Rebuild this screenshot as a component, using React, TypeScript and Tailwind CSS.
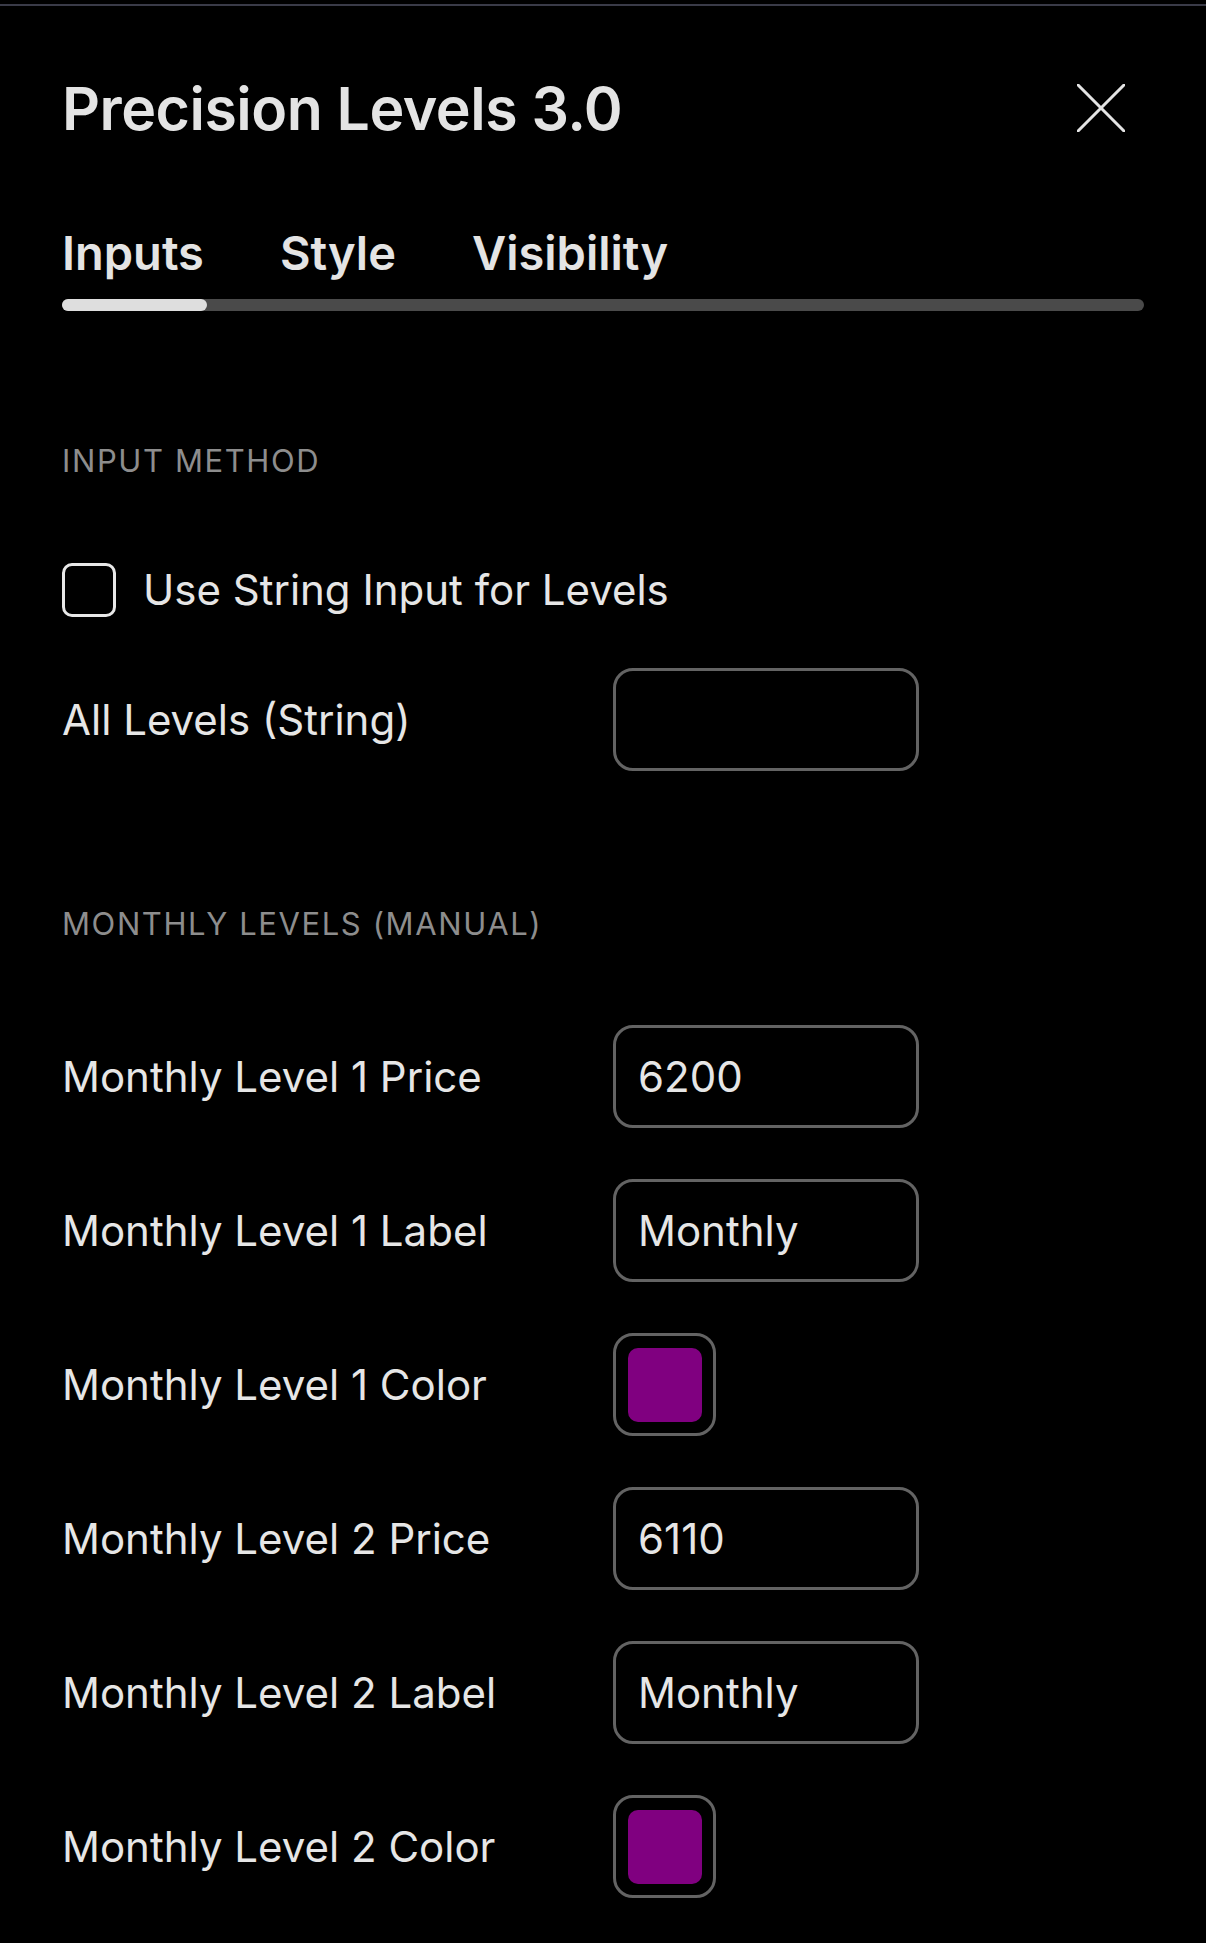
import { useState } from "react";

type Row =
  | { kind: "text"; label: string; value: string }
  | { kind: "color"; label: string; color: string };

const rows: Row[] = [
  { kind: "text", label: "Monthly Level 1 Price", value: "6200" },
  { kind: "text", label: "Monthly Level 1 Label", value: "Monthly" },
  { kind: "color", label: "Monthly Level 1 Color", color: "#800080" },
  { kind: "text", label: "Monthly Level 2 Price", value: "6110" },
  { kind: "text", label: "Monthly Level 2 Label", value: "Monthly" },
  { kind: "color", label: "Monthly Level 2 Color", color: "#800080" },
];

function CloseIcon() {
  return (
    <svg width="48" height="48" viewBox="0 0 48 48" fill="none">
      <path d="M1 1L47 47M47 1L1 47" stroke="#e4e4e4" strokeWidth="3" strokeLinecap="round" />
    </svg>
  );
}

function FieldRow({ row }: { row: Row }) {
  return (
    <div className="flex items-center h-[103px]">
      <div className="w-[551px] text-[42px] leading-none text-[#e6e6e6]">{row.label}</div>
      {row.kind === "text" ? (
        <div className="w-[306px] h-[103px] rounded-[20px] border-[3px] border-[#636363] flex items-center pl-[22px] text-[42px] leading-none text-[#e6e6e6]">
          {row.value}
        </div>
      ) : (
        <div className="w-[103px] h-[103px] rounded-[20px] border-[3px] border-[#636363] flex items-center justify-center">
          <div className="w-[74px] h-[74px] rounded-[10px]" style={{ backgroundColor: row.color }} />
        </div>
      )}
    </div>
  );
}

export default function App() {
  const [tab, setTab] = useState("Inputs");
  const [useString, setUseString] = useState(false);

  return (
    <div className="min-h-screen w-full bg-black font-['Inter',sans-serif] overflow-hidden">
      <div className="h-[2px] mt-[4px] bg-[#3a3b48]" />

      <div className="px-[62px]">
        {/* header */}
        <div className="mt-[72px] h-[60px] flex items-center justify-between">
          <h1 className="text-[59px] font-semibold leading-none text-[#e4e4e4] tracking-[-0.5px]">
            Precision Levels 3.0
          </h1>
          <button className="mr-[19px]">
            <CloseIcon />
          </button>
        </div>

        {/* tabs */}
        <div className="mt-[89px] h-[50px] flex items-center gap-[76px]">
          {["Inputs", "Style", "Visibility"].map((t) => (
            <button
              key={t}
              onClick={() => setTab(t)}
              className="text-[47px] font-semibold leading-none text-[#e4e4e4]"
            >
              {t}
            </button>
          ))}
        </div>
        <div className="mt-[22px] h-[12px] rounded-full bg-[#4a4a4a] relative">
          <div className="absolute left-0 top-0 h-[12px] w-[145px] rounded-full bg-[#dedede]" />
        </div>

        {tab === "Inputs" && (
          <>
            <div className="mt-[134px] h-[30px] flex items-center text-[31px] leading-none text-[#8d8d8d] tracking-[1.6px]">
              INPUT METHOD
            </div>

            <label className="mt-[88px] h-[54px] flex items-center gap-[27px] cursor-pointer">
              <span
                onClick={() => setUseString(!useString)}
                className="w-[54px] h-[54px] rounded-[10px] border-[3px] border-[#e8e8e8] shrink-0"
              />
              <span className="text-[42px] leading-none text-[#e6e6e6]">Use String Input for Levels</span>
            </label>

            <div className="mt-[51px] flex items-center h-[103px]">
              <div className="w-[551px] text-[42px] leading-none text-[#e6e6e6]">All Levels (String)</div>
              <div className="w-[306px] h-[103px] rounded-[20px] border-[3px] border-[#636363]" />
            </div>

            <div className="mt-[137px] h-[30px] flex items-center text-[31px] leading-none text-[#8d8d8d] tracking-[1.6px]">
              MONTHLY LEVELS (MANUAL)
            </div>

            <div className="mt-[87px] flex flex-col gap-[51px] pb-[40px]">
              {rows.map((r) => (
                <FieldRow key={r.label} row={r} />
              ))}
            </div>
          </>
        )}
      </div>
    </div>
  );
}
